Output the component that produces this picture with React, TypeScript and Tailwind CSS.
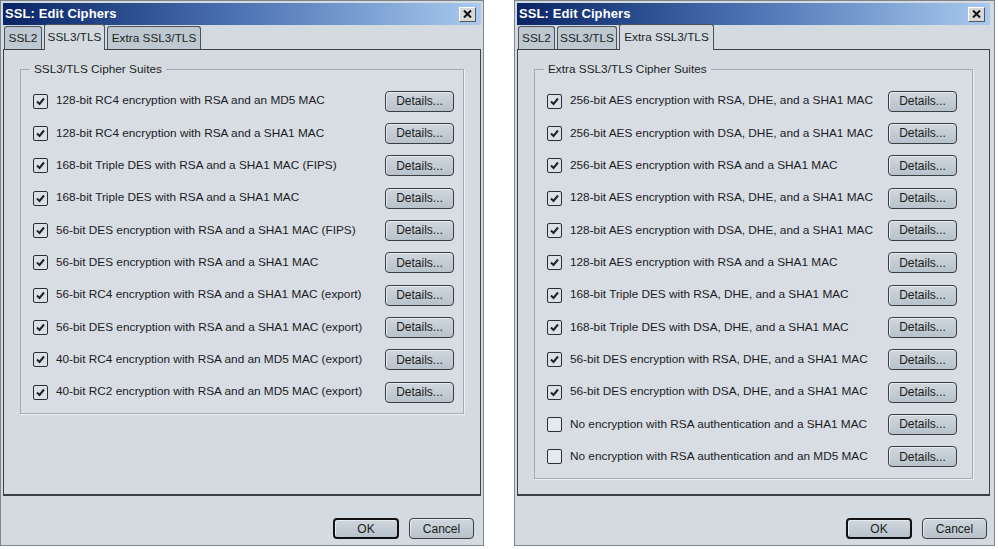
import React from "react";

type DialogProps = {
  width: number;
  active: number;
  legend: string;
  rows: { label: string; checked: boolean }[];
  detailsMr: string;
  right: boolean;
};

const FONT = { fontFamily: '"Liberation Sans", Arial, sans-serif' };

function Check({ checked }: { checked: boolean }) {
  return (
    <div
      className={
        "w-[15px] h-[15px] shrink-0 rounded-[2px] border-[1.5px] border-[#2b2f33] flex items-center justify-center " +
        (checked ? "bg-[#d9e0e6]" : "bg-[#e4e9ed]")
      }
    >
      {checked && (
        <svg width="11" height="11" viewBox="0 0 11 11">
          <path d="M2 5.5 L4.5 8 L9 2.5" fill="none" stroke="#1f2326" strokeWidth="2" />
        </svg>
      )}
    </div>
  );
}

function Btn({ label, w, def }: { label: string; w: string; def?: boolean }) {
  return (
    <div
      className={
        "h-[21px] rounded-[4px] bg-gradient-to-b from-[#cfd7de] to-[#b8c2cb] flex items-center justify-center text-[12px] text-[#1b1d20] shadow-[inset_1px_1px_0_#e6ebef] " +
        w +
        " " +
        (def ? "border-2 border-[#111]" : "border border-[#3a3e42]")
      }
    >
      {label}
    </div>
  );
}

function Dialog({ active, legend, rows, detailsMr, right }: DialogProps) {
  const tabs = ["SSL2", "SSL3/TLS", "Extra SSL3/TLS"];
  const tabW = right ? ["w-[37px]", "w-[60px]", "w-[95px]"] : ["w-[38px]", "w-[61px]", "w-[94px]"];
  return (
    <div
      className={
        "h-[546px] flex flex-col bg-[#d3dae0] border border-[#7d848a] pt-[1px] pl-[2px] " +
        (right ? "w-[481px] pr-[4px]" : "w-[484px] pr-[2px]")
      }
      style={FONT}
    >
      {/* title bar */}
      <div className="h-[22px] mt-[1px] flex items-center justify-between bg-gradient-to-r from-[#0a2466] via-[#4e74b4] to-[#a9caee] pl-[2px] pr-[5px]">
        <span className="text-white font-bold text-[13px] tracking-[0.1px]">SSL: Edit Ciphers</span>
        <div className="w-[17px] h-[15px] bg-[#d6d8da] border border-t-white border-l-white border-r-[#555] border-b-[#555] flex items-center justify-center">
          <svg width="9" height="8" viewBox="0 0 9 8">
            <path d="M1 0.5 L8 7.5 M8 0.5 L1 7.5" stroke="#111" strokeWidth="2" />
          </svg>
        </div>
      </div>
      {/* tabs */}
      <div className="h-[24px] flex items-end pl-[1px] gap-[2px] relative z-10">
        {tabs.map((t, i) => (
          <div
            key={t}
            className={
              "flex items-center justify-center pt-[1px] text-[11.8px] text-[#1c1f22] rounded-t-[3px] border border-b-0 border-[#4c5257] " +
              tabW[i] +
              " " +
              (i === active ? "h-[26px] bg-[#d3dae0] -mb-[1px]" : "h-[23px] bg-[#bec8d0] border-b")
            }
          >
            {t}
          </div>
        ))}
      </div>
      {/* panel */}
      <div className="h-[447px] border border-[#3d4145] border-b-2 bg-[#d3dae0] px-[16px] pt-[12px]">
        <fieldset className="border border-[#a3acb4] shadow-[1px_1px_0_#eef2f5] bg-[#d7dde3] pb-[5px] pt-[9px]">
          <legend className="ml-[9px] px-[4px] text-[11.8px] text-[#1c1f22] leading-[14px]">{legend}</legend>
          {rows.map((r) => (
            <div key={r.label} className="h-[32.34px] flex items-center pl-[12px]">
              <Check checked={r.checked} />
              <span className="ml-[8px] text-[11.8px] text-[#1a1c1f] whitespace-nowrap">{r.label}</span>
              <div className={"ml-auto " + detailsMr}>
                <Btn label="Details..." w="w-[69px]" />
              </div>
            </div>
          ))}
        </fieldset>
      </div>
      {/* footer */}
      <div className={"flex-1 flex items-start justify-end gap-[10px] pt-[22px] " + (right ? "pr-[3px]" : "pr-[7px]")}>
        <Btn label="OK" w="w-[66px]" def />
        <Btn label="Cancel" w="w-[65px]" />
      </div>
    </div>
  );
}

export default function App() {
  const left = [
    "128-bit RC4 encryption with RSA and an MD5 MAC",
    "128-bit RC4 encryption with RSA and a SHA1 MAC",
    "168-bit Triple DES with RSA and a SHA1 MAC (FIPS)",
    "168-bit Triple DES with RSA and a SHA1 MAC",
    "56-bit DES encryption with RSA and a SHA1 MAC (FIPS)",
    "56-bit DES encryption with RSA and a SHA1 MAC",
    "56-bit RC4 encryption with RSA and a SHA1 MAC (export)",
    "56-bit DES encryption with RSA and a SHA1 MAC (export)",
    "40-bit RC4 encryption with RSA and an MD5 MAC (export)",
    "40-bit RC2 encryption with RSA and an MD5 MAC (export)",
  ].map((label) => ({ label, checked: true }));
  const right = [
    "256-bit AES encryption with RSA, DHE, and a SHA1 MAC",
    "256-bit AES encryption with DSA, DHE, and a SHA1 MAC",
    "256-bit AES encryption with RSA and a SHA1 MAC",
    "128-bit AES encryption with RSA, DHE, and a SHA1 MAC",
    "128-bit AES encryption with DSA, DHE, and a SHA1 MAC",
    "128-bit AES encryption with RSA and a SHA1 MAC",
    "168-bit Triple DES with RSA, DHE, and a SHA1 MAC",
    "168-bit Triple DES with DSA, DHE, and a SHA1 MAC",
    "56-bit DES encryption with RSA, DHE, and a SHA1 MAC",
    "56-bit DES encryption with DSA, DHE, and a SHA1 MAC",
    "No encryption with RSA authentication and a SHA1 MAC",
    "No encryption with RSA authentication and an MD5 MAC",
  ].map((label, i) => ({ label, checked: i < 10 }));
  return (
    <div className="w-[998px] h-[549px] bg-white flex items-start">
      <Dialog width={484} active={1} legend="SSL3/TLS Cipher Suites" rows={left} detailsMr="mr-[9px]" right={false} />
      <div className="w-[30px] shrink-0" />
      <Dialog width={481} active={2} legend="Extra SSL3/TLS Cipher Suites" rows={right} detailsMr="mr-[15px]" right={true} />
    </div>
  );
}
